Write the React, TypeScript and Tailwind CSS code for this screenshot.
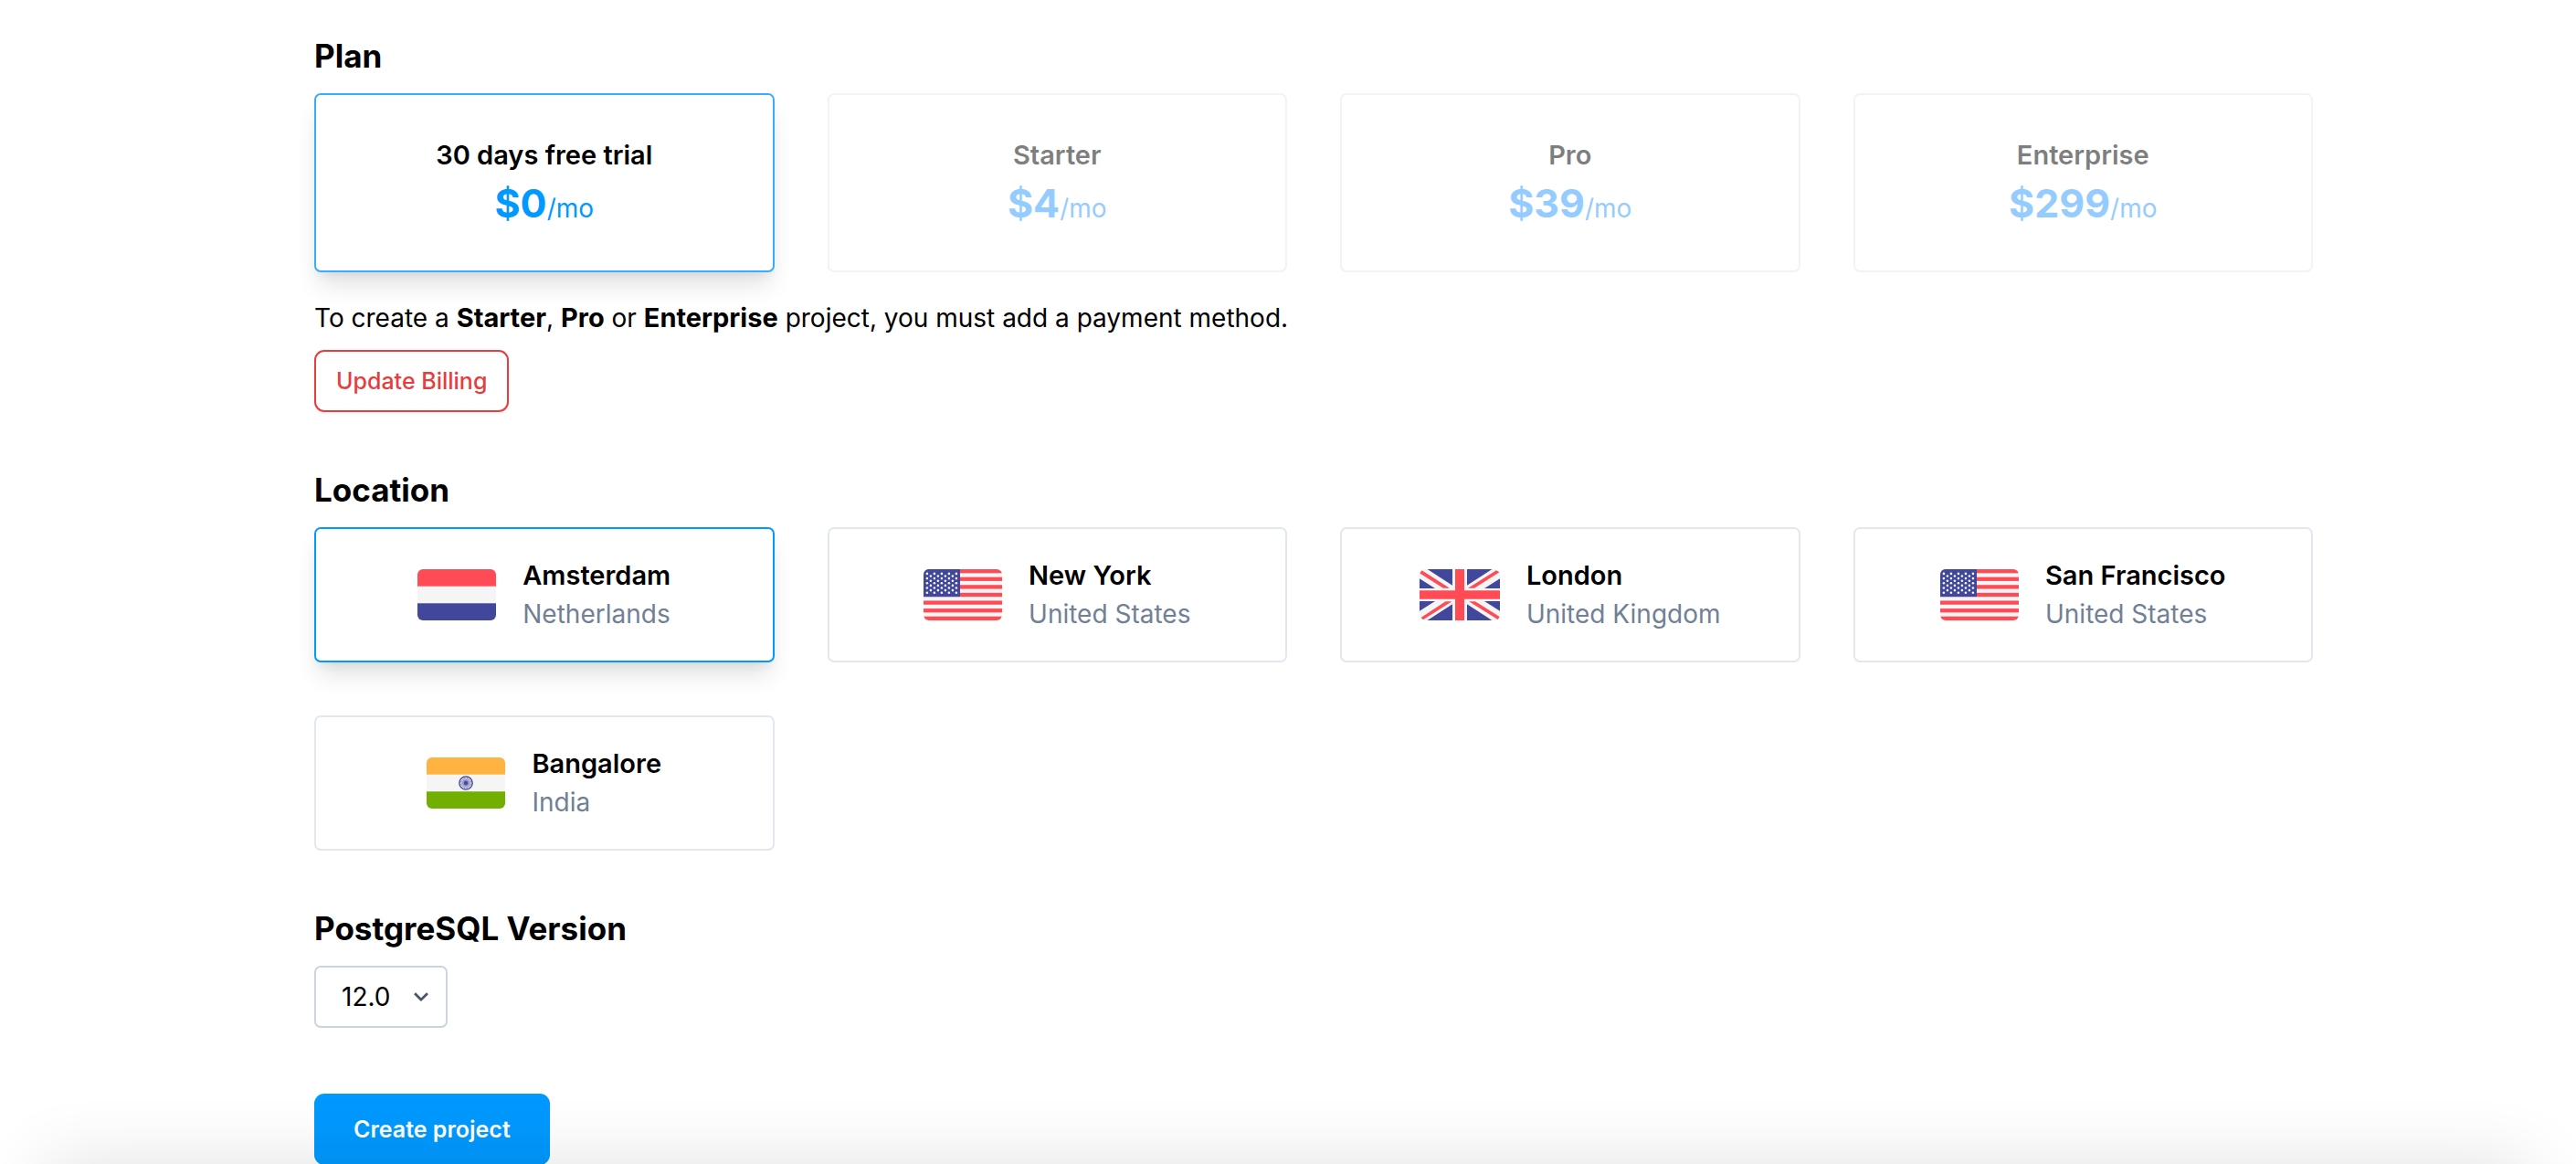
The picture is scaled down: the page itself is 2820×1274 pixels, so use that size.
import { useState, type ReactNode } from "react";

const FLAG_CLASS = "h-[56px] w-[86px] shrink-0 overflow-hidden rounded-[6px]";

function NetherlandsFlag() {
  return (
    <svg viewBox="0 0 86 56" preserveAspectRatio="none" className={FLAG_CLASS} aria-hidden="true">
      <rect width="86" height="56" fill="#f5f5f5" />
      <rect width="86" height="18.7" fill="#ff4b55" />
      <rect y="37.3" width="86" height="18.7" fill="#41479b" />
    </svg>
  );
}

function UnitedStatesFlag() {
  const stripe = 56 / 13;
  const stars: ReactNode[] = [];
  for (let row = 0; row < 9; row++) {
    const odd = row % 2 === 1;
    for (let col = 0; col < (odd ? 4 : 5); col++) {
      stars.push(
        <circle key={`${row}-${col}`} cx={3.9 + (odd ? 4 : 0) + col * 8} cy={4.9 + row * 2.6} r="1.3" />
      );
    }
  }
  return (
    <svg viewBox="0 0 86 56" preserveAspectRatio="none" className={FLAG_CLASS} aria-hidden="true">
      <rect width="86" height="56" fill="#f5f5f5" />
      {[0, 2, 4, 6, 8, 10, 12].map((i) => (
        <rect key={i} y={i * stripe} width="86" height={stripe} fill="#ff4b55" />
      ))}
      <rect width="40" height={stripe * 7} fill="#41479b" />
      <g fill="#f5f5f5">{stars}</g>
    </svg>
  );
}

function UnitedKingdomFlag() {
  return (
    <svg
      viewBox="0 0 88 56"
      preserveAspectRatio="none"
      className="h-[56px] w-[88px] shrink-0 overflow-hidden rounded-[6px]"
      aria-hidden="true"
    >
      <rect width="88" height="56" fill="#f5f5f5" />
      <path
        fill="#41479b"
        d="M8.6 0H36V17.7ZM0 10.3V21H17ZM79.4 0H52V17.7ZM88 10.3V21H71ZM0 45.7V35H17ZM8.6 56H36V38.3ZM79.4 56H52V38.3ZM88 45.7V35H71Z"
      />
      <path fill="#ff4b55" d="M39 0H49V23.3H88V32.7H49V56H39V32.7H0V23.3H39Z" />
      <path
        fill="#ff4b55"
        d="M0 4.3L2.5 1.3L33 20.7H26ZM84 1.2L87.5 3.3L60 20.7H53ZM1.5 53L4 55.2L35.5 35.3H28.5ZM54 35.3H61L88 52.3L86 55.2Z"
      />
    </svg>
  );
}

function IndiaFlag() {
  return (
    <svg viewBox="0 0 86 56" preserveAspectRatio="none" className={FLAG_CLASS} aria-hidden="true">
      <rect width="86" height="56" fill="#f5f5f5" />
      <rect width="86" height="18.7" fill="#ffb441" />
      <rect y="37.3" width="86" height="18.7" fill="#73af00" />
      <g stroke="#41479b" fill="none">
        <circle cx="43" cy="28" r="7.2" strokeWidth="1.3" />
        {Array.from({ length: 12 }, (_, i) => (
          <path key={i} d="M43 21V35" strokeWidth="0.5" transform={`rotate(${i * 15} 43 28)`} />
        ))}
      </g>
      <circle cx="43" cy="28" r="1.9" fill="#41479b" />
    </svg>
  );
}

const plans = [
  { name: "30 days free trial", price: "$0", enabled: true },
  { name: "Starter", price: "$4", enabled: false },
  { name: "Pro", price: "$39", enabled: false },
  { name: "Enterprise", price: "$299", enabled: false },
];

const locations = [
  { city: "Amsterdam", country: "Netherlands", flag: <NetherlandsFlag /> },
  { city: "New York", country: "United States", flag: <UnitedStatesFlag /> },
  { city: "London", country: "United Kingdom", flag: <UnitedKingdomFlag /> },
  { city: "San Francisco", country: "United States", flag: <UnitedStatesFlag /> },
  { city: "Bangalore", country: "India", flag: <IndiaFlag /> },
];

const SELECTED_SHADOW = "shadow-[0_18px_27px_-5px_rgba(0,0,0,0.12),0_7px_11px_-4px_rgba(0,0,0,0.06)]";

function Heading({ children }: { children: ReactNode }) {
  return <h2 className="mb-[14px] text-[35px] leading-[54px] font-bold">{children}</h2>;
}

export default function App() {
  const [plan, setPlan] = useState("30 days free trial");
  const [location, setLocation] = useState("Amsterdam");

  return (
    <div className="relative h-screen overflow-hidden bg-white font-['Inter',sans-serif] text-[28px] leading-[43px] text-black">
      <main className="flex flex-col gap-[58px] pt-[34px] pr-[288px] pl-[344px]">
        <section>
          <Heading>Plan</Heading>
          <div className="grid grid-cols-4 gap-[58px]">
            {plans.map((p) => (
              <button
                key={p.name}
                type="button"
                disabled={!p.enabled}
                aria-pressed={plan === p.name}
                onClick={() => setPlan(p.name)}
                className={`rounded-[7px] border-2 bg-white pt-[44px] pb-[42px] text-center ${
                  plan === p.name ? `border-[#38acff] ${SELECTED_SHADOW}` : "border-[#e2e8f0]"
                } ${p.enabled ? "" : "opacity-50"}`}
              >
                <span className="block text-[29px] font-semibold">{p.name}</span>
                <span
                  className={`block text-[43px] leading-[63px] font-bold ${
                    p.enabled ? "text-[#0099ff]" : "text-[#2b9bff]"
                  }`}
                >
                  {p.price}
                  <span className="text-[28px] leading-none font-normal">/mo</span>
                </span>
              </button>
            ))}
          </div>
          <p className="mt-[28px] mb-[13px]">
            To create a <strong className="text-[29px] font-bold">Starter</strong>,{" "}
            <strong className="text-[29px] font-bold">Pro</strong> or{" "}
            <strong className="text-[29px] font-bold">Enterprise</strong> project, you must add a payment method.
          </p>
          <button
            type="button"
            className="block h-[68px] rounded-[11px] border-2 border-[#e53e3e] bg-white px-[22px] text-[25px] font-medium text-[#e53e3e] shadow-[0_2px_4px_rgba(0,0,0,0.05)]"
          >
            Update Billing
          </button>
        </section>

        <section>
          <Heading>Location</Heading>
          <div className="grid grid-cols-4 gap-[58px]">
            {locations.map((l) => (
              <button
                key={l.city}
                type="button"
                aria-pressed={location === l.city}
                onClick={() => setLocation(l.city)}
                className={`flex items-center justify-center gap-[29px] rounded-[7px] border-2 bg-white py-[29px] text-left ${
                  location === l.city ? `border-[#0099ff] ${SELECTED_SHADOW}` : "border-[#e2e8f0]"
                }`}
              >
                {l.flag}
                <span>
                  <span className="block text-[29px] font-semibold">{l.city}</span>
                  <span className="block text-[#718096]">{l.country}</span>
                </span>
              </button>
            ))}
          </div>
        </section>

        <section>
          <label htmlFor="pg-version">
            <Heading>PostgreSQL Version</Heading>
          </label>
          <div className="relative inline-block align-top">
            <select
              id="pg-version"
              defaultValue="12.0"
              className="block h-[68px] w-[146px] appearance-none rounded-[7px] border-2 border-[#cbd5e0] bg-white pl-[28px]"
            >
              <option>12.0</option>
              <option>11.0</option>
            </select>
            <svg
              viewBox="0 0 20 20"
              className="pointer-events-none absolute inset-y-0 right-[15px] my-auto size-[28px] fill-[#4a5568]"
              aria-hidden="true"
            >
              <path d="M9.293 12.95l.707.707L15.657 8l-1.414-1.414L10 10.828 5.757 6.586 4.343 8z" />
            </svg>
          </div>
          <button
            type="button"
            className="mt-[72px] block h-[78px] rounded-[11px] bg-[#0099ff] px-[43px] text-[25px] font-semibold text-white"
          >
            Create project
          </button>
        </section>
      </main>

      <div className="pointer-events-none absolute inset-x-[48px] top-full h-[100px] shadow-[0_0_80px_rgba(0,0,0,0.12)]" />
    </div>
  );
}
